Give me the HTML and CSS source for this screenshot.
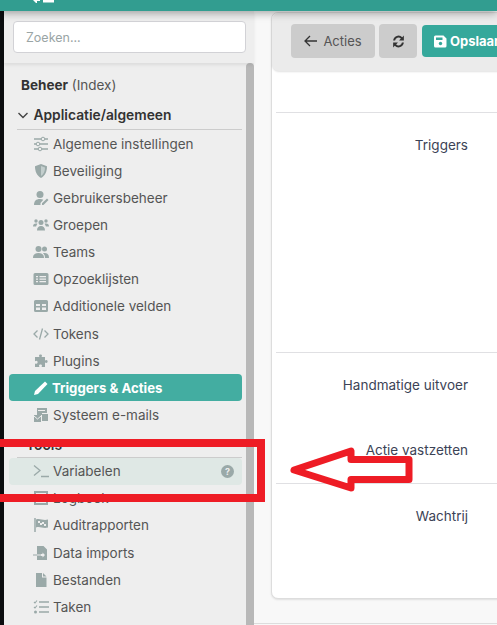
FILE: index.html
```html
<!DOCTYPE html>
<html lang="nl">
<head>
    <meta charset="UTF-8">
    <title>Triggers &amp; Acties</title>
    <link rel="stylesheet" href="styles.css">
</head>
<body>
    <header class="topbar">
        <svg class="topbar-logo" width="22" height="3" viewBox="0 0 22 3"><path d="M1 0h7v1H5v2H4zM11 0h11v2.500H11z" fill="#fff"/></svg>
    </header>
    <div class="layout">
        <div class="edge"></div>
        <aside class="sidebar">
            <div class="search-box">
                <input class="search" type="text" placeholder="Zoeken...">
            </div>
            <div class="menu-wrap">
                <nav class="menu">
                    <div class="menu-index"><b>Beheer</b> (Index)</div>
                    <div class="menu-group">
                        <svg class="chevron" width="12" height="12" viewBox="0 0 12 12"><path d="M1.500 4l4.500 4.500L10.500 4" fill="none" stroke="#444" stroke-width="1.400"/></svg>
                        Applicatie/algemeen
                    </div>
                    <a class="item"><svg class="icon" viewBox="0 0 16 16"><path d="M1 3h14M1 8h14M1 13h14" stroke="#9aa9a8" stroke-width="1.300" fill="none"/><circle cx="10" cy="3" r="1.800" fill="#eee" stroke="#9aa9a8"/><circle cx="5" cy="8" r="1.800" fill="#eee" stroke="#9aa9a8"/><circle cx="7" cy="13" r="1.800" fill="#eee" stroke="#9aa9a8"/></svg>Algemene instellingen</a>
                    <a class="item"><svg class="icon" viewBox="0 0 16 16"><path d="M8 1l6 2.200c0 5-1.500 9.300-6 11.800-4.500-2.500-6-6.800-6-11.800z" fill="#9aa9a8"/><path d="M8 3v10c2.800-1.800 3.900-4.700 4-8.500z" fill="#c3cecd"/></svg>Beveiliging</a>
                    <a class="item"><svg class="icon" viewBox="0 0 16 16"><circle cx="7" cy="4.500" r="3.500" fill="#9aa9a8"/><path d="M1 15c0-4 2-6 6-6 1.400 0 2.500.3 3.300.8L7.500 13v2z" fill="#9aa9a8"/><path d="M9 15v-1.800l5-4.700 1.500 1.500-5 5z" fill="#9aa9a8"/></svg>Gebruikersbeheer</a>
                    <a class="item"><svg class="icon" viewBox="0 0 16 16"><circle cx="8" cy="5.500" r="2.500" fill="#9aa9a8"/><circle cx="3" cy="4" r="1.700" fill="#9aa9a8"/><circle cx="13" cy="4" r="1.700" fill="#9aa9a8"/><path d="M4 13.500c0-3 1.500-4.500 4-4.500s4 1.500 4 4.500zM0 9.500C0 7.500 1 6.500 3 6.500c.6 0 1 .1 1.400.3C4 7.500 3.400 8.500 3.100 9.500zM16 9.500c0-2-1-3-3-3-.6 0-1 .1-1.400.3.400.7 1 1.700 1.300 2.700z" fill="#9aa9a8"/></svg>Groepen</a>
                    <a class="item"><svg class="icon" viewBox="0 0 16 16"><circle cx="5.500" cy="5" r="3" fill="#9aa9a8"/><circle cx="11.500" cy="5" r="2.500" fill="#9aa9a8"/><path d="M0 14c0-3.500 2-5 5.500-5s5.500 1.500 5.500 5zM12 14c0-2-.6-3.700-2-4.800.5-.1 1-.2 1.700-.2C14.500 9 16 10.500 16 14z" fill="#9aa9a8"/></svg>Teams</a>
                    <a class="item"><svg class="icon" viewBox="0 0 16 16"><path d="M2 2h12a1.500 1.500 0 0 1 1.500 1.500v9A1.500 1.500 0 0 1 14 14H2a1.500 1.500 0 0 1-1.500-1.500v-9A1.500 1.500 0 0 1 2 2z" fill="#9aa9a8"/><path d="M3 5h2v1.300H3zM3 7.500h2v1.300H3zM3 10h2v1.300H3zM6.500 5H13v1.300H6.500zM6.500 7.500H13v1.300H6.500zM6.500 10H13v1.300H6.500z" fill="#eee"/></svg>Opzoeklijsten</a>
                    <a class="item"><svg class="icon" viewBox="0 0 16 16"><path d="M2.500 2h11A1.500 1.500 0 0 1 15 3.500v9a1.500 1.500 0 0 1-1.500 1.500h-11A1.500 1.500 0 0 1 1 12.500v-9A1.500 1.500 0 0 1 2.500 2z" fill="#9aa9a8"/><path d="M3 6h4v2H3zM9 6h4v2H9zM3 9.500h4V12H3zM9 9.500h4V12H9z" fill="#eee"/></svg>Additionele velden</a>
                    <a class="item"><svg class="icon" viewBox="0 0 16 16"><path d="M4.500 4.500L1 8l3.500 3.500M11.500 4.500L15 8l-3.500 3.500M9.500 2.500l-3 11" fill="none" stroke="#9aa9a8" stroke-width="1.300"/></svg>Tokens</a>
                    <a class="item"><svg class="icon" viewBox="0 0 16 16"><path d="M6 2.500C6 1 9 1 9 2.500c0 .6-.4.9-.4 1.500H12v3.400c.6 0 .9-.4 1.500-.4 1.500 0 1.500 3 0 3-.6 0-.9-.4-1.500-.4V14H8.600c0-.6.4-.9.4-1.500 0-1.500-3-1.500-3 0 0 .6.400.9.400 1.500H2v-3.600c.6 0 .9.400 1.500.4 1.500 0 1.500-3 0-3-.6 0-.9.400-1.500.4V4h4.400C6.400 3.400 6 3.100 6 2.500z" fill="#9aa9a8"/></svg>Plugins</a>
                    <a class="item active"><svg class="icon" viewBox="0 0 16 16"><path d="M12 1.500l2.500 2.500L5 14l-4 1 1-4z" fill="#fff"/></svg>Triggers &amp; Acties</a>
                    <a class="item"><svg class="icon" viewBox="0 0 16 16"><path d="M4 1h10v5H9v2H4zM1 8h7v7H1z" fill="#9aa9a8"/><path d="M1 9l3.500 3L8 9M5 3.500h7" fill="none" stroke="#eee"/><path d="M9 7h6v7H9z" fill="#9aa9a8"/></svg>Systeem e-mails</a>
                    <div class="menu-group tools">Tools</div>
                    <a class="item hover"><svg class="icon" viewBox="0 0 16 16"><path d="M1 2.500L7 7.500 1 12.500M8 13.500h8" fill="none" stroke="#9aa9a8" stroke-width="1.300"/></svg>Variabelen<span class="help">?</span></a>
                    <a class="item"><svg class="icon" viewBox="0 0 16 16"><path d="M2 2h12v12H2z" fill="none" stroke="#9aa9a8" stroke-width="2"/></svg>Logboek</a>
                    <a class="item"><svg class="icon" viewBox="0 0 16 16"><path d="M2 1v14" stroke="#9aa9a8" stroke-width="1.500"/><path d="M3 2.500c4-1.500 7 1.500 12 0v8c-5 1.500-8-1.500-12 0z" fill="#9aa9a8"/><path d="M5 4h2v2H5zM9 5h2v2H9zM7 6h2v2H7zM11 7h2v2h-2z" fill="#eee"/></svg>Auditrapporten</a>
                    <a class="item"><svg class="icon" viewBox="0 0 16 16"><path d="M4 1h6.500L14 4.500V15H4v-4h5.500v1.500L12 10 9.500 7.500V9H4z" fill="#9aa9a8"/><path d="M0 9.500h8v1H0z" fill="#9aa9a8"/></svg>Data imports</a>
                    <a class="item"><svg class="icon" viewBox="0 0 16 16"><path d="M3 1h6v4.500h4.500V15H3z" fill="#9aa9a8"/><path d="M10 1l3.500 3.500H10z" fill="#9aa9a8"/></svg>Bestanden</a>
                    <a class="item"><svg class="icon" viewBox="0 0 16 16"><path d="M6 3h10M6 8h10M6 13h10" stroke="#9aa9a8" stroke-width="1.600"/><path d="M1 3l1 1 2-2.500M1 8l1 1 2-2.500" fill="none" stroke="#9aa9a8" stroke-width="1.100"/><circle cx="2.500" cy="13" r="1.500" fill="#9aa9a8"/></svg>Taken</a>
                </nav>
                <div class="scrollbar"></div>
            </div>
        </aside>
        <main class="content">
            <div class="card">
                <div class="toolbar">
                    <button class="btn"><svg width="13" height="12" viewBox="0 0 13 12"><path d="M6 1L1 6l5 5M1 6h12" fill="none" stroke="#333" stroke-width="1.300"/></svg>Acties</button>
                    <button class="btn btn-icon"><svg width="15" height="15" viewBox="0 0 14 14"><path d="M2 6a5 5 0 0 1 8.500-3L12 1.500V6H7.500l1.700-1.700A3.200 3.200 0 0 0 3.800 6zM12 8a5 5 0 0 1-8.500 3L2 12.500V8h4.500l-1.700 1.700A3.200 3.200 0 0 0 10.200 8z" fill="#333"/></svg></button>
                    <button class="btn btn-save"><svg width="13" height="13" viewBox="0 0 13 13"><path d="M1.500 0.500h8l3 3v7.500a1.500 1.500 0 0 1-1.500 1.500H1.500A1.500 1.500 0 0 1 0 11V2A1.500 1.500 0 0 1 1.500 0.500z" fill="#fff"/><path d="M2 2.500h6.500v2.500H2z" fill="#35a89b"/><circle cx="6.500" cy="8.500" r="1.700" fill="#35a89b"/></svg>Opslaan</button>
                </div>
                <section class="row row-intro"></section>
                <section class="row row-triggers"><div class="label">Triggers</div></section>
                <section class="row row-manual">
                    <div class="label">Handmatige uitvoer</div>
                    <div class="label label-lock">Actie vastzetten</div>
                </section>
                <section class="row"><div class="label">Wachtrij</div></section>
            </div>
            <div class="bottom-line"></div>
        </main>
    </div>

    <!-- red markup drawn on top of the screenshot -->
    <div class="mark-box"></div>
    <svg class="mark-arrow" width="140" height="60" viewBox="280 440 140 60">
        <path d="M294 470L351 451V459.500H409V479.500H351V488Z" fill="none" stroke="#ee1c25" stroke-width="7" stroke-linejoin="round"/>
    </svg>
</body>
</html>
```

FILE: styles.css
```css
html, body {
    height: 100%;
}
body {
    margin: 0;
    height: 625px;
    overflow: hidden;
    position: relative;
    display: flex;
    flex-direction: column;
    font-family: 'Inter', 'Open Sans', sans-serif;
    font-size: 13.5px;
    color: #555;
    background: #f8f8f8;
}
.topbar {
    height: 11px;
    flex: none;
    background: #329d90;
    position: relative;
    z-index: 2;
    box-shadow: 0 2px 8px rgba(0, 0, 0, .35);
}
.topbar-logo {
    display: block;
    margin-left: 32px;
}
.layout {
    flex: 1;
    display: flex;
    min-height: 0;
}
.edge {
    width: 4px;
    background: #0b0d0f;
}
.sidebar {
    width: 250px;
    background: #eee;
    display: flex;
    flex-direction: column;
}
.search-box {
    height: 52px;
    flex: none;
    box-sizing: border-box;
    padding: 10px 8px 0 9px;
    box-shadow: 0 2px 3px rgba(0, 0, 0, .08);
    position: relative;
}
.search {
    display: block;
    width: 100%;
    height: 32px;
    box-sizing: border-box;
    padding: 0 12px;
    border: 1px solid #d2d2d6;
    border-radius: 4px;
    background: #fff;
    font-family: inherit;
    font-size: 12.5px;
}
.search::placeholder {
    color: #9aa5a5;
}
.menu-wrap {
    flex: 1;
    display: flex;
    min-height: 0;
}
.menu {
    flex: 1;
    padding: 0 4px 0 5px;
    min-width: 0;
}
.scrollbar {
    width: 8px;
    flex: none;
    background: #b8b8b8;
    border-radius: 4px 4px 0 0;
}
.menu-index {
    padding: 10px 0 0 12px;
    height: 26px;
    line-height: 24px;
}
.menu-index b {
    color: #333;
    font-weight: 700;
}
.menu-group {
    margin-left: 8px;
    margin-top: 4px;
    height: 27px;
    line-height: 24px;
    box-sizing: border-box;
    border-bottom: 1px solid #ccc;
    color: #333;
    font-weight: 600;
    font-size: 13.8px;
}
.chevron {
    margin-right: 1px;
    vertical-align: -1px;
}
.menu-group.tools {
    height: 29px;
    margin-top: 0;
    padding: 3px 0 0 9px;
    line-height: 26px;
}
.item {
    display: flex;
    align-items: center;
    height: 27.15px;
    padding: 0 8px 0 24px;
    border-radius: 4px;
}
.icon {
    width: 16px;
    height: 16px;
    margin-right: 4px;
    flex: none;
}
.item.active {
    background: #43ada1;
    color: #fff;
    font-weight: 700;
    font-size: 13.2px;
}
.item.active .icon {
    margin-right: 3px;
}
.item.hover {
    background: #dfe8e5;
}
.help {
    margin-left: auto;
    width: 13px;
    height: 13px;
    border-radius: 50%;
    background: #9aa9a8;
    color: #eee;
    font-size: 9px;
    font-weight: 700;
    line-height: 13px;
    text-align: center;
}
.content {
    flex: 1;
    min-width: 0;
    padding: 1px 0 0 17px;
    position: relative;
    overflow: hidden;
}
.card {
    width: 300px;
    height: 587px;
    box-sizing: border-box;
    background: #fff;
    border: 1px solid #ddd;
    border-radius: 7px;
    box-shadow: 0 1px 2px rgba(0, 0, 0, .1);
}
.toolbar {
    height: 58px;
    box-sizing: border-box;
    padding: 11px 0 0 19px;
    display: flex;
    align-items: flex-start;
    gap: 4px;
    background: #ebebeb;
    border-radius: 7px;
    box-shadow: 0 1px 2px rgba(0, 0, 0, .12);
    overflow: hidden;
}
.btn {
    flex: none;
    height: 34px;
    width: 84px;
    display: flex;
    align-items: center;
    justify-content: center;
    gap: 6px;
    padding: 0;
    border: 0;
    border-radius: 4px;
    background: #ccc;
    color: #555;
    font-family: inherit;
    font-size: 13px;
}
.btn-icon {
    width: 38px;
}
.btn-save {
    width: 90px;
    height: 32px;
    margin: 1px 0 0 1px;
    justify-content: flex-start;
    padding-left: 12px;
    gap: 3px;
    background: #35a89b;
    color: #fff;
    font-weight: 700;
}
.row {
    border-top: 1px solid #e0e0e3;
    margin-left: 4px;
}
.row-intro {
    height: 41px;
    border-top: 0;
}
.row-triggers {
    height: 239px;
}
.row-manual {
    height: 130px;
}
.label {
    width: 192px;
    padding-top: 23px;
    text-align: right;
    line-height: 18px;
    font-size: 13.5px;
    color: #3c4356;
}
.label-lock {
    padding-top: 47px;
}
.bottom-line {
    position: absolute;
    left: 0;
    right: 0;
    bottom: 1px;
    height: 1px;
    background: #ddd;
}
.mark-box {
    position: absolute;
    left: -8px;
    top: 439px;
    width: 257px;
    height: 47px;
    border: 8px solid #ee1c25;
}
.mark-arrow {
    position: absolute;
    left: 280px;
    top: 440px;
}
```
